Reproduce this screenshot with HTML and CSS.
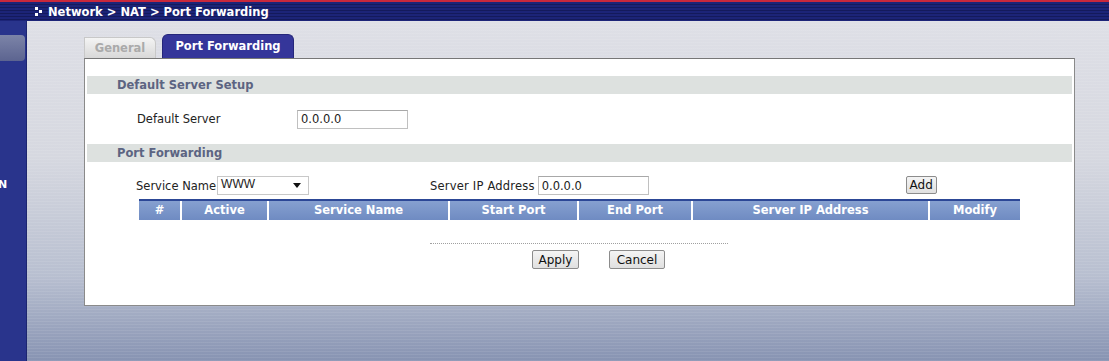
FILE: index.html
```html
<!DOCTYPE html>
<html lang="en">
<head>
    <meta charset="UTF-8">
    <title>Port Forwarding</title>
    <link rel="stylesheet" href="styles.css">
</head>
<body>
    <!-- 顶部标题栏 -->
    <div class="topbar">
        <span class="crumb-icon"><i></i><i></i><i></i></span>
        <span class="crumb">Network &gt; NAT &gt; Port Forwarding</span>
    </div>

    <div class="layout">
        <!-- 左侧菜单 -->
        <div class="sidebar">
            <div class="side-btn"></div>
            <div class="side-letter">N</div>
        </div>

        <!-- 主区域 -->
        <div class="main">
            <div class="tabs">
                <div class="tab">General</div>
                <div class="tab active">Port Forwarding</div>
            </div>

            <div class="panel">
                <h3 class="section">Default Server Setup</h3>
                <div class="field-row">
                    <label class="label-default">Default Server</label>
                    <input class="text-input" type="text" value="0.0.0.0">
                </div>

                <h3 class="section">Port Forwarding</h3>
                <div class="form-row">
                    <label>Service Name</label>
                    <div class="select">WWW<span class="arrow"></span></div>
                    <label class="label-ip">Server IP Address</label>
                    <input class="text-input" type="text" value="0.0.0.0">
                    <button class="btn btn-add">Add</button>
                </div>

                <div class="table-head">
                    <div class="col c1">#</div>
                    <div class="col c2">Active</div>
                    <div class="col c3">Service Name</div>
                    <div class="col c4">Start Port</div>
                    <div class="col c5">End Port</div>
                    <div class="col c6">Server IP Address</div>
                    <div class="col c7">Modify</div>
                </div>

                <div class="divider"></div>
                <div class="actions">
                    <button class="btn btn-apply">Apply</button>
                    <button class="btn btn-cancel">Cancel</button>
                </div>
            </div>
        </div>
    </div>
</body>
</html>
```

FILE: styles.css
```css
* {
    margin: 0;
    padding: 0;
    box-sizing: border-box;
}

body {
    width: 1109px;
    height: 361px;
    overflow: hidden;
    font-family: "DejaVu Sans", Verdana, sans-serif;
    font-size: 11.5px;
    color: #222;
    background-color: #8a96b4;
}

/* 顶部标题栏，带横条纹 */
.topbar {
    height: 21px;
    border-top: 2px solid #c8283c;
    background: repeating-linear-gradient(to bottom, #1c2478 0, #1c2478 2px, #141a5c 2px, #141a5c 3px);
    display: flex;
    align-items: center;
    padding-left: 35px;
    color: #fff;
    font-weight: bold;
    font-size: 11.5px;
}

.crumb-icon {
    width: 8px;
    height: 9px;
    position: relative;
    margin-right: 5px;
}

.crumb-icon i {
    position: absolute;
    width: 3px;
    height: 3px;
    background: #fff;
}

.crumb-icon i:nth-child(1) { left: 0; top: 0; }
.crumb-icon i:nth-child(2) { left: 4px; top: 3px; }
.crumb-icon i:nth-child(3) { left: 0; top: 6px; }

.layout {
    display: flex;
    height: 340px;
}

.sidebar {
    width: 27px;
    background-color: #29348c;
    border-right: 1px solid #1c2570;
    padding-top: 14px;
}

.side-btn {
    width: 25px;
    height: 26px;
    background: linear-gradient(to bottom, #7c84a8, #5c6490);
    border-radius: 0 4px 4px 0;
}

.side-letter {
    margin-top: 117px;
    color: #fff;
    font-weight: bold;
    font-size: 11px;
    margin-left: -2px;
}

/* 主区域渐变 + 条纹 */
.main {
    flex: 1;
    padding: 13px 34px 0 57px;
    background:
        repeating-linear-gradient(to bottom, rgba(255,255,255,0.08) 0, rgba(255,255,255,0.08) 1px, rgba(0,0,0,0) 1px, rgba(0,0,0,0) 3px),
        linear-gradient(to bottom, #dedfe6 0, #d6d8e0 40%, #b8bfd0 75%, #8793b2 100%);
}

.tabs {
    display: flex;
    align-items: flex-end;
    height: 24px;
}

.tab {
    height: 21px;
    width: 72px;
    margin-right: 6px;
    border-radius: 0 6px 0 0;
    background: linear-gradient(to bottom, #f4f4f4, #d8d8d8);
    border: 1px solid #c8c8c8;
    border-bottom: none;
    color: #aaaaaa;
    font-weight: bold;
    text-align: center;
    line-height: 20px;
}

.tab.active {
    height: 24px;
    width: 132px;
    background: #35369a;
    border: 1px solid #25267a;
    border-bottom: none;
    border-radius: 6px 6px 0 0;
    color: #fff;
    line-height: 22px;
}

.panel {
    height: 248px;
    background: #fff;
    border: 1px solid #8a8a8a;
    border-top-color: #777;
    padding: 17px 2px 0 2px;
}

.section {
    height: 18px;
    line-height: 18px;
    background-color: #dde1df;
    color: #5c6482;
    font-size: 11.5px;
    font-weight: bold;
    padding-left: 30px;
}

.field-row {
    display: flex;
    align-items: center;
    height: 50px;
    padding-left: 50px;
}

.label-default {
    width: 160px;
}

.text-input {
    width: 111px;
    height: 19px;
    border: 1px solid #c0c0c0;
    border-top-color: #a8a8a8;
    padding-left: 3px;
    font-family: "DejaVu Sans", Verdana, sans-serif;
    font-size: 11.5px;
    color: #222;
}

.form-row {
    display: flex;
    align-items: center;
    margin-top: 14px;
    height: 19px;
    padding-left: 49px;
}

.select {
    width: 92px;
    height: 19px;
    border: 1px solid #c8c8c8;
    margin-left: 1px;
    padding-left: 3px;
    line-height: 14px;
    position: relative;
    font-family: "Liberation Sans", Arial, sans-serif;
    font-size: 12px;
}

.arrow {
    position: absolute;
    right: 7px;
    top: 6px;
    border-left: 4px solid transparent;
    border-right: 4px solid transparent;
    border-top: 5px solid #111;
}

.label-ip {
    margin-left: 121px;
    margin-right: 3px;
    letter-spacing: 0.2px;
}

.btn {
    height: 18px;
    padding: 0 5px;
    background: linear-gradient(to bottom, #f4f4f4, #e0e0e0);
    border: 1px solid #8c8c8c;
    border-radius: 2px;
    font-family: "DejaVu Sans", Verdana, sans-serif;
    font-size: 12px;
    color: #111;
}

.btn-add {
    margin-left: 257px;
    margin-top: -2px;
    width: 31px;
    padding: 0;
}

.table-head {
    display: flex;
    margin: 4px 0 0 52px;
    width: 881px;
    height: 21px;
    border-top: 2px solid #2c4796;
    background: linear-gradient(to bottom, #86a0d0, #6f8bc2);
}

.col {
    color: #fff;
    font-weight: bold;
    text-align: center;
    line-height: 18px;
    border-right: 2px solid #fff;
}

.c1 { width: 43px; }
.c2 { width: 87px; }
.c3 { width: 181px; }
.c4 { width: 129px; }
.c5 { width: 114px; }
.c6 { width: 237px; }
.c7 { width: 90px; border-right: none; }

.divider {
    width: 298px;
    margin: 23px 0 0 343px;
    border-top: 1px dotted #a0a0a0;
}

.actions {
    display: flex;
    gap: 30px;
    margin-top: 6px;
    padding-left: 445px;
}

.btn-apply { width: 47px; height: 19px; padding: 0; }
.btn-cancel { width: 56px; height: 19px; padding: 0; }
```
